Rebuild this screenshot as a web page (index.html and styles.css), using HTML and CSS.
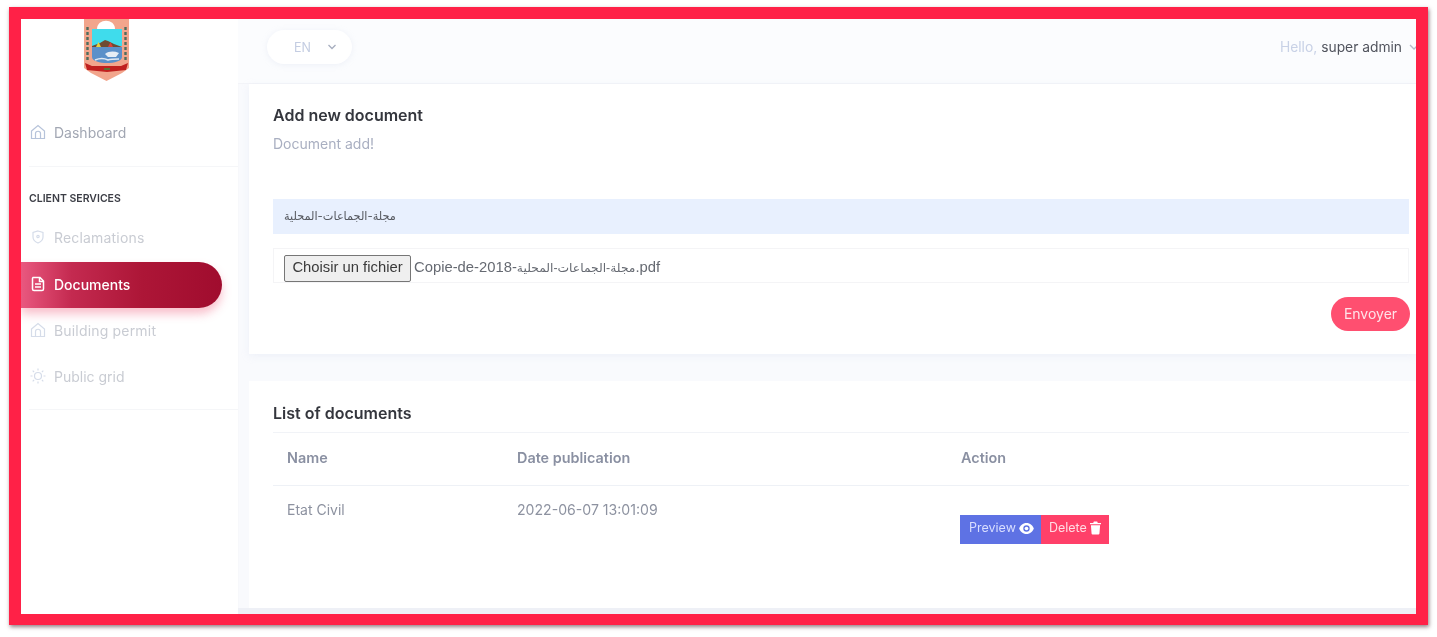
FILE: index.html
```html
<!DOCTYPE html>
<html lang="en">
<head>
<meta charset="utf-8">
<title>Documents</title>
<link rel="stylesheet" href="styles.css">
</head>
<body>
<div class="frame">
  <aside class="sidebar">
    <div class="logo">
      <svg class="crest" viewBox="0 0 45 62" width="45" height="62">
        <path d="M0 0H45V49L38 54L22.500 62L7 54L0 49Z" fill="#f2a58c"/>
        <path d="M13 10C13 -1 31 -1 31 10Z" fill="#ffffff"/>
        <rect x="8" y="10" width="30" height="17" fill="#3fdcec"/>
        <path d="M8 27L16 24L21 21L24 22L30 25L38 28V29H8Z" fill="#6e4a33"/>
        <path d="M8 28H38V38C38 42 30 44 23 44C16 44 8 42 8 38Z" fill="#5b90c9"/>
        <path d="M21 35C25 32 30 32 35 34L32 38H24Z" fill="#e6edf5"/>
        <path d="M11 41C16 39 20 39 24 41C27 40 31 40 35 40" fill="none" stroke="#dfe8f2" stroke-width="1.500"/>
        <path d="M12 28L14.500 23L17 28Z" fill="#e8d23c"/>
        <path d="M24 28L26.500 23L29 28Z" fill="#d8403a"/>
        <path d="M1 44L8 47H37L44 44L42 51L23 53L3 51Z" fill="#c0201f"/>
        <path d="M20 50H26" stroke="#3c8a3c" stroke-width="1.500"/>
        <path d="M3.500 8V42M41.500 8V42" stroke="#4f6d5e" stroke-width="2.400" stroke-dasharray="3 2"/>
      </svg>
    </div>
    <nav class="nav">
      <a class="nav-item">
        <svg class="nav-icon" viewBox="0 0 16 16"><path d="M1.500 7L8 1.500L14.500 7V14.500H1.500ZM5.500 14.500V9.500C5.500 6.500 10.500 6.500 10.500 9.500V14.500"/></svg>
        <span>Dashboard</span>
      </a>
      <div class="divider"></div>
      <h6 class="nav-heading">CLIENT SERVICES</h6>
      <a class="nav-item muted">
        <svg class="nav-icon" viewBox="0 0 16 16"><path d="M8 2L13 3.500V8C13 11 10.500 13 8 14C5.500 13 3 11 3 8V3.500Z"/><circle cx="8" cy="7.500" r="1.200"/></svg>
        <span class="wide">Reclamations</span>
      </a>
      <a class="nav-item active">
        <svg class="nav-icon" viewBox="0 0 16 16"><path d="M3 1.500H10L13.500 5V13C13.500 14 13 14.500 12 14.500H4C3 14.500 2.500 14 2.500 13V2.500C2.500 2 3 1.500 3 1.500ZM9.500 1.500V5.500H13.500M5 8H11M5 11H11"/></svg>
        <span>Documents</span>
      </a>
      <a class="nav-item muted">
        <svg class="nav-icon" viewBox="0 0 16 16"><path d="M1.500 7L8 1.500L14.500 7V14.500H1.500ZM5.500 14.500V9.500C5.500 6.500 10.500 6.500 10.500 9.500V14.500"/></svg>
        <span class="wide">Building permit</span>
      </a>
      <a class="nav-item muted">
        <svg class="nav-icon" viewBox="0 0 16 16"><circle cx="8" cy="8" r="3.500"/><path d="M8 .5V2.500M8 13.500V15.500M.5 8H2.500M13.500 8H15.500M2.700 2.700L4.100 4.100M11.900 11.900L13.300 13.300M2.700 13.300L4.100 11.900M11.900 4.100L13.300 2.700"/></svg>
        <span>Public grid</span>
      </a>
      <div class="divider lower"></div>
    </nav>
  </aside>
  <div class="main">
    <header class="topbar">
      <div class="lang">
        <span>EN</span>
        <svg class="chevron" viewBox="0 0 10 6"><path d="M1.500 1L5 4.500L8.500 1"/></svg>
      </div>
      <div class="user">
        <span class="hello">Hello,</span> <span class="name">super admin</span>
        <svg class="chevron user-chevron" viewBox="0 0 10 6"><path d="M1 1L5 5L9 1"/></svg>
      </div>
    </header>
    <section class="card form-card">
      <h2 class="card-title">Add new document</h2>
      <p class="card-note">Document add!</p>
      <div class="text-field">مجلة-الجماعات-المحلية</div>
      <div class="file-field">
        <button class="file-button" type="button">Choisir un fichier</button>
        <span class="file-name">Copie-de-2018-<span class="file-arabic">مجلة-الجماعات-المحلية</span>.pdf</span>
      </div>
      <div class="form-actions"><button class="send" type="button">Envoyer</button></div>
    </section>
    <section class="card list-card">
      <h2 class="card-title">List of documents</h2>
      <table class="docs">
        <thead>
          <tr><th class="col-name">Name</th><th class="col-date">Date publication</th><th>Action</th></tr>
        </thead>
        <tbody>
          <tr>
            <td>Etat Civil</td>
            <td class="date">2022-06-07 13:01:09</td>
            <td>
              <div class="actions">
                <a class="btn preview">Preview
                  <svg class="btn-icon" viewBox="0 0 16 12"><path fill-rule="evenodd" d="M8 0C12 0 15 3 16 6C15 9 12 12 8 12C4 12 1 9 0 6C1 3 4 0 8 0ZM8 2.500A3.500 3.500 0 1 0 8 9.500A3.500 3.500 0 1 0 8 2.500Z"/><circle cx="8" cy="6" r="2"/></svg>
                </a>
                <a class="btn delete">Delete
                  <svg class="btn-trash" viewBox="0 0 12 14"><path d="M0 1.500H3.500L4.200 0H7.800L8.500 1.500H12V3H0ZM1 4H11L10.300 13C10.200 13.600 9.800 14 9.200 14H2.800C2.200 14 1.800 13.600 1.700 13Z"/></svg>
                </a>
              </div>
            </td>
          </tr>
        </tbody>
      </table>
    </section>
    <div class="main-foot"></div>
  </div>
</div>
</body>
</html>
```
FILE: styles.css
```css
* { box-sizing: border-box; }
html, body { height: 100%; }
body {
  margin: 0;
  padding: 7px 9px 12px;
  background: #ffffff;
  font-family: Inter, "DejaVu Sans", sans-serif;
  overflow: hidden;
}
.frame {
  display: flex;
  height: 618px;
  border: 12px solid #ff2147;
  border-bottom-width: 11px;
  box-shadow: 1px 2px 4px rgba(60, 20, 30, .55);
  background: #ffffff;
  overflow: hidden;
  filter: blur(.5px);
}
.sidebar {
  width: 217px;
  flex: none;
  background: #ffffff;
}
.logo { display: flex; justify-content: center; height: 90px; padding-right: 47px; }
.crest { display: block; }
.nav { display: flex; flex-direction: column; }
.nav-item {
  display: flex;
  align-items: center;
  gap: 8px;
  height: 46px;
  padding-left: 9px;
  font-size: 14px;
  color: #a2a7b3;
}
.nav-item.muted { color: #c9ccd3; }
.wide { letter-spacing: .18px; }
.nav-icon {
  width: 16px;
  height: 16px;
  flex: none;
  fill: none;
  stroke: #b6c3da;
  stroke-width: 1.200;
}
.muted .nav-icon { stroke: #d5dce9; }
.nav-item.active {
  width: 201px;
  margin: 2px 0 -1px;
  padding-bottom: 2px;
  color: #ffffff;
  font-weight: 500;
  border-radius: 0 23px 23px 0;
  background: linear-gradient(90deg, #e9587f 0%, #c42a50 25%, #ad1637 60%, #a00c2e 100%);
  box-shadow: 0 6px 10px rgba(240, 90, 120, .38);
}
.active .nav-icon { stroke: #ffffff; stroke-width: 1.500; }
.divider { height: 1px; margin: 11px 0 0 8px; background: #f5f6f8; }
.divider.lower { margin-top: 10px; }
.nav-heading {
  margin: 25px 0 8px 8px;
  height: 14px;
  font-size: 10.500px;
  line-height: 14px;
  font-weight: 600;
  color: #3b3d45;
}
.main {
  flex: 1;
  min-width: 0;
  background: #f9fafd;
  display: flex;
  flex-direction: column;
  box-shadow: inset 1px 0 0 #f7f8fb;
}
.topbar {
  display: flex;
  align-items: center;
  justify-content: space-between;
  flex: none;
  height: 65px;
  padding: 0 0 8px 29px;
  background: #fbfcfe;
  border-bottom: 1px solid #f3f4f8;
}
.lang {
  display: flex;
  align-items: center;
  width: 85px;
  height: 34px;
  padding-left: 27px;
  gap: 16px;
  border-radius: 17px;
  background: #ffffff;
  box-shadow: 0 1px 6px rgba(190, 200, 225, .22);
  font-size: 12.500px;
  color: #c4cde2;
}
.chevron { width: 10px; height: 6px; fill: none; stroke: #a7aebf; stroke-width: 1.300; }
.user { display: flex; align-items: center; gap: 4px; font-size: 13.800px; margin-right: -3px; }
.hello { color: #c8d1e6; }
.name { color: #50535d; }
.user-chevron { margin-left: 3px; stroke: #b4bbca; }
.card { background: #ffffff; flex: none; margin-left: 11px; padding: 0 7px 0 24px; }
.form-card { height: 270px; box-shadow: 0 2px 8px rgba(190, 200, 225, .18); }
.list-card { height: 227px; margin-top: 27px; }
.card-title {
  margin: 0;
  font-size: 16px;
  line-height: 20px;
  font-weight: 600;
  color: #34363d;
}
.form-card .card-title { height: 41px; padding-top: 21px; }
.list-card .card-title { height: 51px; padding-top: 22px; }
.card-note { margin: 9px 0 0; font-size: 14px; line-height: 20px; color: #a9afc1; }
.text-field {
  display: flex;
  align-items: center;
  height: 35px;
  margin-top: 45px;
  padding: 0 0 2px 11px;
  background: #e8f0fe;
  font-size: 11.300px;
  color: #55585f;
}
.file-field {
  display: flex;
  align-items: flex-end;
  height: 35px;
  margin-top: 14px;
  padding-left: 10px;
  gap: 3px;
  border: 1px solid #f4f4f6;
}
.file-button {
  width: 127px;
  height: 27px;
  padding: 0 0 3px;
  background: #efefef;
  border: 1px solid #767676;
  border-radius: 2px;
  font-family: "Liberation Sans", sans-serif;
  font-size: 14.800px;
  color: #3a3a3a;
}
.file-name {
  font-family: "Liberation Sans", "DejaVu Sans", sans-serif;
  font-size: 14.800px;
  line-height: 27px;
  color: #666a72;
}
.file-arabic { font-size: 12.300px; }
.form-actions { display: flex; justify-content: flex-end; margin-top: 14px; margin-right: -1px; }
.send {
  width: 79px;
  height: 34px;
  padding: 0 0 2px;
  border: 0;
  border-radius: 17px;
  background: #ff4f70;
  font-family: Inter, sans-serif;
  font-size: 14px;
  color: #ffe3e9;
}
.docs { width: 100%; border-collapse: collapse; table-layout: fixed; border-top: 1px solid #f1f3f7; }
.docs th {
  height: 53px;
  padding: 0 14px 4px;
  text-align: left;
  font-size: 14.400px;
  font-weight: 600;
  color: #8a90a2;
  border-bottom: 1px solid #eef1f6;
}
.col-name { width: 230px; }
.col-date { width: 444px; }
.docs td {
  padding: 14px 14px 0;
  vertical-align: top;
  font-size: 14px;
  line-height: 20px;
  color: #8d92a0;
}
.docs .date { font-size: 14.100px; }
.actions { display: flex; margin: 15px 0 0 -1px; }
.btn {
  display: flex;
  align-items: center;
  height: 29px;
  padding-bottom: 3px;
  gap: 3px;
  font-size: 12.500px;
  color: #ffffff;
}
.preview { width: 81px; padding-left: 9px; background: #5e72e4; color: #d9deff; }
.delete { width: 68px; padding-left: 8px; background: #ff4069; color: #ffdbe3; }
.btn-icon { width: 15px; height: 11px; fill: #ffffff; }
.btn-trash { width: 11px; height: 14px; fill: #ffffff; }
.main-foot { flex: 1; background: #eef0f6; }
```
